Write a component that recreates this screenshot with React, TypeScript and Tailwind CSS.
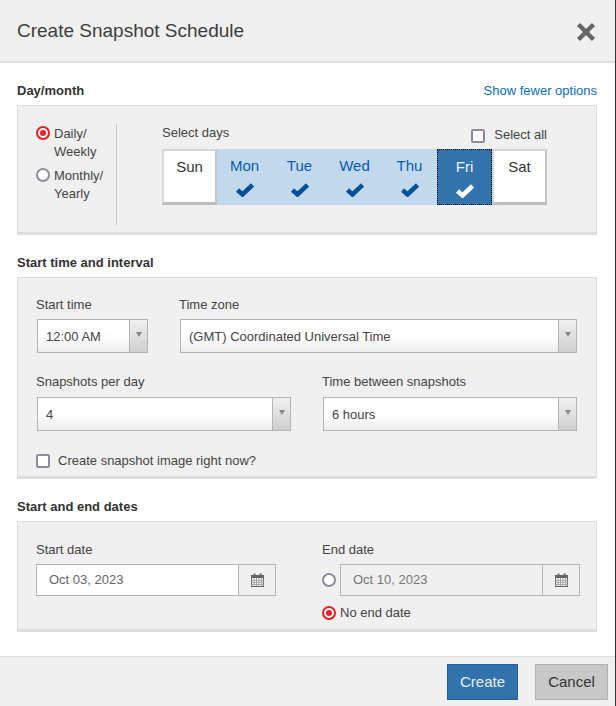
const days = [
  { name: 'Sun', state: 'off' },
  { name: 'Mon', state: 'on' },
  { name: 'Tue', state: 'on' },
  { name: 'Wed', state: 'on' },
  { name: 'Thu', state: 'on' },
  { name: 'Fri', state: 'focus' },
  { name: 'Sat', state: 'off' },
];

function Radio({ checked }: { checked?: boolean }) {
  return checked ? (
    <span className="flex h-[14px] w-[14px] shrink-0 items-center justify-center rounded-full border-2 border-[#ed1c24] bg-white">
      <span className="h-[6px] w-[6px] rounded-full bg-[#ed1c24]" />
    </span>
  ) : (
    <span className="block h-[14px] w-[14px] shrink-0 rounded-full border-2 border-[#8e8c9c] bg-white" />
  );
}

function Checkbox() {
  return <span className="block h-[14px] w-[14px] shrink-0 rounded-[2px] border-2 border-[#8e8c9c] bg-white" />;
}

function Select({ value, className }: { value: string; className: string }) {
  return (
    <div className={`flex h-[34px] border border-[#b4b4b4] bg-gradient-to-b from-white from-50% to-[#ececec] ${className}`}>
      <div className="flex flex-1 items-center pl-[8px] pt-[1px] text-[13px] text-[#444]">{value}</div>
      <div className="flex w-[18px] items-center justify-center border-l border-[#b4b4b4] bg-gradient-to-b from-[#f0f0f0] to-[#cfcfcf]">
        <svg width="6" height="5" viewBox="0 0 6 5" className="mb-[3px]">
          <path d="M0 0h6L3 5z" fill="#888" />
        </svg>
      </div>
    </div>
  );
}

function CalendarIcon() {
  return (
    <svg width="13" height="14" viewBox="0 0 13 14">
      <rect x="0.5" y="2.5" width="12" height="11" fill="#f4f4f4" stroke="#666" />
      <rect x="0" y="2" width="13" height="3" fill="#666" />
      <rect x="2.5" y="0.5" width="2" height="3" fill="#666" />
      <rect x="8.5" y="0.5" width="2" height="3" fill="#666" />
      <path d="M0 7.5h13M0 9.5h13M0 11.5h13M3 5v8M5.5 5v8M8 5v8M10.5 5v8" stroke="#999" strokeWidth="0.8" />
    </svg>
  );
}

function DateInput({ value, disabled, className }: { value: string; disabled?: boolean; className: string }) {
  return (
    <div className={`flex h-[32px] border border-[#b4b4b4] ${disabled ? 'bg-[#f0f0f0]' : 'bg-white'} ${className}`}>
      <div className={`flex flex-1 items-center pl-[12px] text-[13px] ${disabled ? 'text-[#777]' : 'text-[#666]'}`}>{value}</div>
      <div className="flex w-[37px] items-center justify-center border-l border-[#b4b4b4] bg-[#f0f0f0]">
        <CalendarIcon />
      </div>
    </div>
  );
}

function Panel({ className, children }: { className: string; children: React.ReactNode }) {
  return <div className={`border border-b-[3px] border-[#dedede] bg-[#f0f0f0] ${className}`}>{children}</div>;
}

function Heading({ children, className }: { children: React.ReactNode; className: string }) {
  return <h3 className={`text-[13px] font-bold leading-[15px] text-[#333] ${className}`}>{children}</h3>;
}

function Check({ className }: { className: string }) {
  return (
    <svg width="18" height="14" viewBox="0 0 18 14" className={className}>
      <path d="M1.5 7L6.5 11.5L16.5 2" fill="none" stroke="currentColor" strokeWidth="4.5" />
    </svg>
  );
}

function DayButton({ name, state }: { name: string; state: string }) {
  if (state === 'off') {
    return (
      <div className="flex h-[56px] w-[55px] justify-center border-2 border-b-[3px] border-[#d6d6d6] border-b-[#bcbcbc] border-r-[#c4c4c4] bg-white pt-[7px] text-[15px] leading-[17px] text-[#333]">
        {name}
      </div>
    );
  }
  const focused = state === 'focus';
  return (
    <div
      className={`flex h-[56px] w-[55px] flex-col items-center pt-[8px] text-[15px] leading-[17px] ${
        focused ? 'border border-dotted border-black bg-[#3273ad] pt-[7px] text-[#f2f6fa]' : 'bg-[#c2d9ed] text-[#0a5bb0]'
      }`}
    >
      {name}
      <Check className={`mt-[9px] ${focused ? 'text-white' : 'text-[#03509f]'}`} />
    </div>
  );
}

export default function App() {
  return (
    <div className="flex h-[706px] w-[616px] flex-col border-r border-[#333] bg-white font-['Liberation_Sans',Arial,sans-serif] text-[13px] text-[#444]">
      <header className="flex h-[63px] shrink-0 items-center justify-between border-b-2 border-[#dedede] bg-[#f0f0f0] pl-[17px] pr-[19px]">
        <h2 className="text-[19px] leading-[22px] text-[#3d3d3d]">Create Snapshot Schedule</h2>
        <svg width="20" height="20" viewBox="0 0 20 20" className="mt-[3px]">
          <path d="M2.5 2.5l15 15M17.5 2.5l-15 15" stroke="#666" strokeWidth="4.4" />
        </svg>
      </header>

      <main className="flex-1 pl-[17px] pr-[18px]">
        <div className="mt-[20px] flex items-center justify-between">
          <Heading className="">Day/month</Heading>
          <a className="text-[13px] leading-[15px] text-[#0a6ebd]">Show fewer options</a>
        </div>
        <Panel className="mt-[7px] flex h-[130px] w-[580px] pl-[18px] pt-[18px]">
          <div className="flex h-[101px] w-[81px] flex-col gap-[6px] border-r border-[#c4c4c4] pt-[1px] leading-[18px]">
            <div className="flex gap-[4px]">
              <span className="mt-[1px]"><Radio checked /></span>
              <span>Daily/<br />Weekly</span>
            </div>
            <div className="flex gap-[4px]">
              <span className="mt-[1px]"><Radio /></span>
              <span>Monthly/<br />Yearly</span>
            </div>
          </div>
          <div className="ml-[45px] w-[385px]">
            <div className="flex h-[25px] items-start justify-between leading-[18px]">
              <span>Select days</span>
              <span className="flex items-center gap-[9px]">
                <span className="mt-[3px] flex"><Checkbox /></span>
                <span className="mt-[2px]">Select all</span>
              </span>
            </div>
            <div className="flex">
              {days.map((d) => (
                <DayButton key={d.name} name={d.name} state={d.state} />
              ))}
            </div>
          </div>
        </Panel>

        <Heading className="mt-[20px]">Start time and interval</Heading>
        <Panel className="mt-[7px] h-[202px] w-[580px] pl-[18px] pt-[19px]">
          <div className="flex">
            <div className="w-[143px]">
              <div className="leading-[16px]">Start time</div>
              <Select value="12:00 AM" className="ml-[1px] mt-[6px] w-[111px]" />
            </div>
            <div>
              <div className="leading-[16px]">Time zone</div>
              <Select value="(GMT) Coordinated Universal Time" className="ml-[1px] mt-[6px] w-[397px]" />
            </div>
          </div>
          <div className="mt-[21px] flex">
            <div className="w-[286px]">
              <div className="leading-[16px]">Snapshots per day</div>
              <Select value="4" className="ml-[1px] mt-[7px] w-[254px]" />
            </div>
            <div>
              <div className="leading-[16px]">Time between snapshots</div>
              <Select value="6 hours" className="ml-[1px] mt-[7px] w-[254px]" />
            </div>
          </div>
          <div className="mt-[23px] flex items-center gap-[8px] leading-[14px]">
            <Checkbox />
            <span>Create snapshot image right now?</span>
          </div>
        </Panel>

        <Heading className="mt-[20px]">Start and end dates</Heading>
        <Panel className="mt-[7px] h-[111px] w-[580px] pl-[18px] pt-[20px]">
          <div className="flex">
            <div className="w-[286px]">
              <div className="leading-[16px]">Start date</div>
              <DateInput value="Oct 03, 2023" className="mt-[6px] w-[240px]" />
            </div>
            <div>
              <div className="leading-[16px]">End date</div>
              <div className="mt-[6px] flex items-center gap-[4px]">
                <Radio />
                <DateInput value="Oct 10, 2023" disabled className="w-[240px]" />
              </div>
              <div className="mt-[10px] flex items-center gap-[4px] leading-[14px]">
                <Radio checked />
                <span>No end date</span>
              </div>
            </div>
          </div>
        </Panel>
      </main>

      <footer className="flex h-[50px] shrink-0 justify-end gap-[17px] border-t border-[#dedede] bg-[#f0f0f0] pr-[7px] pt-[7px]">
        <button className="h-[36px] w-[71px] border border-[#26609c] bg-[#3273ad] text-[15px] text-[#e8f0f7]">Create</button>
        <button className="h-[36px] w-[73px] border border-[#b0b0b0] bg-[#c8c8c8] text-[15px] text-[#333]">Cancel</button>
      </footer>
    </div>
  );
}
